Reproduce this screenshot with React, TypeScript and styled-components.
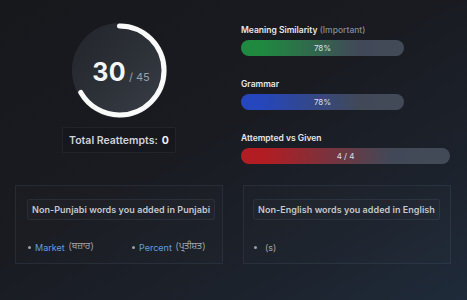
import React from "react";
import styled, { createGlobalStyle } from "styled-components";

const Global = createGlobalStyle`
  html, body { margin: 0; padding: 0; background: #18191d; }
  body { font-family: Inter, "Noto Sans", "Liberation Sans", sans-serif; }
`;

const Page = styled.div`
  width: 467px;
  height: 300px;
  box-sizing: border-box;
  overflow: hidden;
  background: linear-gradient(150deg, #17181c 0%, #191b21 45%, #1c222c 75%, #1f2b3a 100%);
  padding: 23px 16px 0 15px;
`;

const Top = styled.div`
  display: grid;
  grid-template-columns: 208px 210px;
  column-gap: 18px;
`;

const LeftCol = styled.div`
  display: flex;
  flex-direction: column;
  align-items: center;
  gap: 9px;
`;

const Dial = styled.div`
  position: relative;
  width: 95px;
  height: 95px;
  border-radius: 50%;
  background: linear-gradient(135deg, #22252b 0%, #2c3037 50%, #3a3f48 100%);
  display: flex;
  align-items: center;
  justify-content: center;
`;

const DialSvg = styled.svg`
  position: absolute;
  inset: 0;
`;

const Score = styled.div`
  display: flex;
  align-items: baseline;
  gap: 3px;
  margin-top: 2px;
  margin-left: 4px;
`;

const ScoreBig = styled.span`
  font-size: 25px;
  font-weight: 700;
  color: #f4f5f7;
  letter-spacing: 0.3px;
`;

const ScoreSmall = styled.span`
  font-size: 11px;
  color: #9aa0a9;
`;

const Reattempts = styled.div`
  height: 26px;
  box-sizing: border-box;
  padding: 0 6px;
  display: flex;
  align-items: center;
  border: 1px solid rgba(255, 255, 255, 0.05);
  border-radius: 2px;
  background: rgba(0, 0, 0, 0.08);
  font-size: 10.5px;
  font-weight: 600;
  color: #cfd2d8;
  & b { color: #f2f3f5; margin-left: 4px; font-weight: 700; }
`;

const RightCol = styled.div`
  display: flex;
  flex-direction: column;
  gap: 22px;
  padding-top: 1px;
`;

const Metric = styled.div`
  display: flex;
  flex-direction: column;
  gap: 4px;
`;

const Label = styled.div`
  height: 12px;
  line-height: 12px;
  font-size: 8.5px;
  font-weight: 600;
  color: #e6e8eb;
  & span { color: #858b95; font-weight: 500; }
`;

const Bar = styled.div<{ $from: string; $w: number }>`
  width: ${(p) => p.$w}px;
  height: 16px;
  border-radius: 8px;
  background: linear-gradient(90deg, ${(p) => p.$from} 0%, ${(p) => p.$from} 12%, #414958 72%, #434a57 100%);
  display: flex;
  align-items: center;
  justify-content: center;
  font-size: 8px;
  color: #dde0e5;
`;

const Bottom = styled.div`
  display: grid;
  grid-template-columns: 208px 208px;
  column-gap: 20px;
  margin-top: 21px;
`;

const Card = styled.div<{ $pl: number }>`
  height: 79px;
  box-sizing: border-box;
  border: 1px solid rgba(150, 170, 200, 0.1);
  background: rgba(255, 255, 255, 0.012);
  padding: 11px 10px 0 ${(p) => p.$pl}px;
`;

const CardTitle = styled.div`
  display: inline-flex;
  align-items: center;
  height: 21px;
  box-sizing: border-box;
  padding: 0 4px;
  border: 1px solid rgba(150, 170, 200, 0.1);
  border-radius: 3px;
  background: rgba(255, 255, 255, 0.015);
  font-size: 9px;
  font-weight: 600;
  letter-spacing: 0.05px;
  color: #c3c7ce;
  white-space: nowrap;
`;

const Words = styled.ul`
  list-style: none;
  margin: 21px 0 0;
  padding: 0;
  display: grid;
  grid-template-columns: 104px 1fr;
`;

const Word = styled.li`
  display: flex;
  align-items: center;
  height: 12px;
  font-size: 9px;
  color: #a2a7ae;
  white-space: nowrap;
  &::before {
    content: "";
    width: 3px;
    height: 3px;
    border-radius: 50%;
    background: #9aa0a8;
    margin: 0 4px 0 1px;
  }
`;

const En = styled.span`
  color: #5f9fe0;
  margin-right: 4px;
`;

const Pa = styled.span`
  font-family: "Noto Sans Gurmukhi", "Noto Sans", sans-serif;
`;

const R = 44.5;
const C = 2 * Math.PI * R;

export default function App() {
  return (
    <>
      <Global />
      <Page>
        <Top>
          <LeftCol>
            <Dial>
              <DialSvg width="95" height="95" viewBox="0 0 95 95">
                <circle
                  cx="47.5"
                  cy="47.5"
                  r={R}
                  fill="none"
                  stroke="#fafafa"
                  strokeWidth="5"
                  strokeLinecap="round"
                  strokeDasharray={`${(C * 30) / 45} ${C}`}
                  transform="rotate(-90 47.5 47.5)"
                />
              </DialSvg>
              <Score>
                <ScoreBig>30</ScoreBig>
                <ScoreSmall>/ 45</ScoreSmall>
              </Score>
            </Dial>
            <Reattempts>
              Total Reattempts:<b>0</b>
            </Reattempts>
          </LeftCol>
          <RightCol>
            <Metric>
              <Label>
                Meaning Similarity <span>(Important)</span>
              </Label>
              <Bar $from="#1f8a3f" $w={163}>78%</Bar>
            </Metric>
            <Metric>
              <Label>Grammar</Label>
              <Bar $from="#2546bd" $w={163}>78%</Bar>
            </Metric>
            <Metric>
              <Label>Attempted vs Given</Label>
              <Bar $from="#b11d23" $w={209}>4 / 4</Bar>
            </Metric>
          </RightCol>
        </Top>
        <Bottom>
          <Card $pl={11}>
            <CardTitle>Non-Punjabi words you added in Punjabi</CardTitle>
            <Words>
              <Word>
                <En>Market</En>
                <Pa>(ਬਜ਼ਾਰ)</Pa>
              </Word>
              <Word>
                <En>Percent</En>
                <Pa>(ਪ੍ਰਤੀਸ਼ਤ)</Pa>
              </Word>
            </Words>
          </Card>
          <Card $pl={9}>
            <CardTitle>Non-English words you added in English</CardTitle>
            <Words>
              <Word>
                <En></En>
                <span>(s)</span>
              </Word>
            </Words>
          </Card>
        </Bottom>
      </Page>
    </>
  );
}
